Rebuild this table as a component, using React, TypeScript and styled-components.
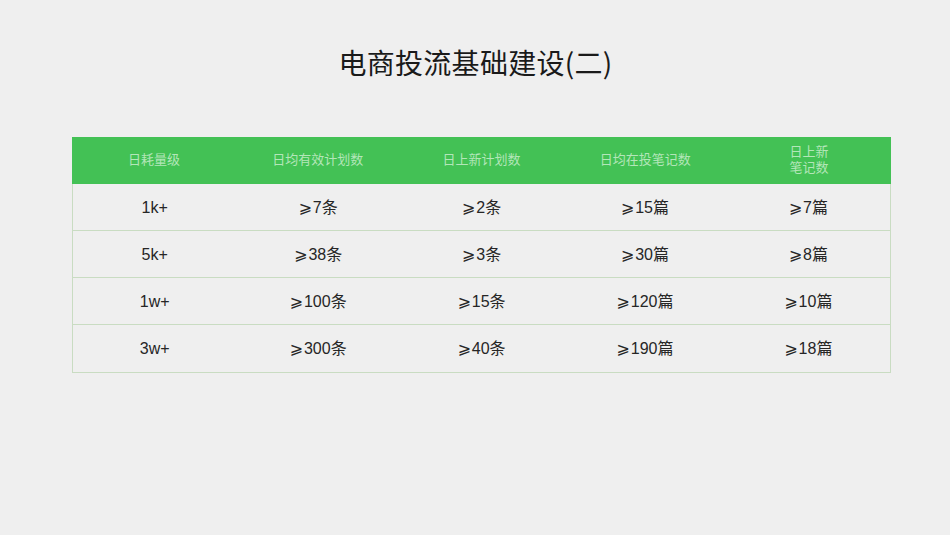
import React from 'react';
import { createGlobalStyle, styled } from 'styled-components';

const GlobalStyle = createGlobalStyle`
  html, body {
    margin: 0;
    padding: 0;
    background: #efefef;
  }
  body {
    font-family: 'Liberation Sans', 'Noto Sans CJK SC', sans-serif;
  }
`;

const headers: string[][] = [
  ['日耗量级'],
  ['日均有效计划数'],
  ['日上新计划数'],
  ['日均在投笔记数'],
  ['日上新', '笔记数'],
];

const rows: string[][] = [
  ['1k+', '7条', '2条', '15篇', '7篇'],
  ['5k+', '38条', '3条', '30篇', '8篇'],
  ['1w+', '100条', '15条', '120篇', '10篇'],
  ['3w+', '300条', '40条', '190篇', '18篇'],
];

export default function App() {
  return (
    <Page>
      <GlobalStyle />
      <Title>电商投流基础建设(二)</Title>
      <Table>
        <HeadRow>
          {headers.map((h, i) => (
            <HeadCell key={i}>
              {h.map((line, j) => (
                <HeadLine key={j}>{line}</HeadLine>
              ))}
            </HeadCell>
          ))}
        </HeadRow>
        {rows.map((r, i) => (
          <Row key={i} $last={i === rows.length - 1}>
            {r.map((c, j) => (
              <Cell key={j}>
                {j > 0 && <Geq>⩾</Geq>}
                {c}
              </Cell>
            ))}
          </Row>
        ))}
      </Table>
    </Page>
  );
}

const Page = styled.div`
  width: 950px;
  height: 535px;
  display: flex;
  flex-direction: column;
  align-items: center;
  background: #efefef;
  padding-top: 43px;
  box-sizing: border-box;
`;

const Title = styled.h1`
  margin: 0 0 0 1px;
  font-size: 28px;
  font-weight: 400;
  color: #1a1a1a;
  line-height: 38px;
  letter-spacing: 0.3px;
  font-family: 'Noto Sans CJK SC', sans-serif;
`;

const Table = styled.div`
  margin-top: 56px;
  align-self: flex-start;
  margin-left: 72px;
  width: 819px;
  display: flex;
  flex-direction: column;
  border: 1px solid #c9dcc2;
  border-top: none;
  box-sizing: border-box;
`;

const HeadRow = styled.div`
  display: grid;
  grid-template-columns: repeat(5, 1fr);
  height: 47px;
  background: #43c155;
  margin: 0 -1px;
`;

const HeadCell = styled.div`
  display: flex;
  flex-direction: column;
  align-items: center;
  justify-content: center;
  padding-bottom: 4px;
  color: #b3e6b9;
  font-size: 13px;
  font-family: 'Noto Sans CJK SC', sans-serif;
`;

const HeadLine = styled.span`
  display: block;
  line-height: 16px;
  height: 16px;
`;

const Row = styled.div<{ $last?: boolean }>`
  display: grid;
  grid-template-columns: repeat(5, 1fr);
  height: 47px;
  border-bottom: ${(p) => (p.$last ? 'none' : '1px solid #c9dcc2')};
  box-sizing: border-box;
`;

const Cell = styled.div`
  display: block;
  text-align: center;
  line-height: 48px;
  height: 46px;
  white-space: nowrap;
  color: #262626;
  font-size: 16px;
  font-family: 'Liberation Sans', 'Noto Sans CJK SC', sans-serif;
`;

const Geq = styled.span`
  font-family: 'DejaVu Sans', 'Noto Sans CJK SC', sans-serif;
  font-size: 16px;
  margin-right: 1px;
`;
